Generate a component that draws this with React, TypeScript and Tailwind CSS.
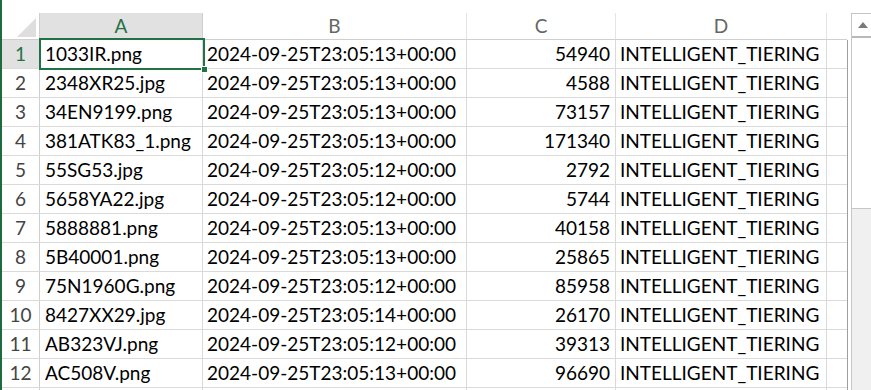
import React from "react"

const rows = [
    ["1033IR.png", "2024-09-25T23:05:13+00:00", "54940"],
    ["2348XR25.jpg", "2024-09-25T23:05:13+00:00", "4588"],
    ["34EN9199.png", "2024-09-25T23:05:13+00:00", "73157"],
    ["381ATK83_1.png", "2024-09-25T23:05:13+00:00", "171340"],
    ["55SG53.jpg", "2024-09-25T23:05:12+00:00", "2792"],
    ["5658YA22.jpg", "2024-09-25T23:05:12+00:00", "5744"],
    ["5888881.png", "2024-09-25T23:05:13+00:00", "40158"],
    ["5B40001.png", "2024-09-25T23:05:13+00:00", "25865"],
    ["75N1960G.png", "2024-09-25T23:05:12+00:00", "85958"],
    ["8427XX29.jpg", "2024-09-25T23:05:14+00:00", "26170"],
    ["AB323VJ.png", "2024-09-25T23:05:12+00:00", "39313"],
    ["AC508V.png", "2024-09-25T23:05:13+00:00", "96690"],
    ["", "", ""],
]

export default function App() {
    return (
        <div className="flex w-[871px] h-[390px] overflow-hidden bg-white text-[19px] text-black" style={{ fontFamily: "Lato, 'Open Sans', sans-serif" }}>
            {/* window edge */}
            <div className="w-[2px] h-full bg-[#1e6b41] shrink-0"></div>

            {/* sheet */}
            <div className="flex flex-col w-[845px] shrink-0">
                <div className="h-[13px] shrink-0"></div>
                <div className="flex h-[27px] shrink-0 border-b border-[#cfcfcf] text-[#666]">
                    <div className="w-[38px] border-r border-[#cfcfcf] flex items-end justify-end">
                        <svg width="24" height="23" viewBox="0 0 24 23">
                            <polygon points="2,21 21,2 21,21" fill="#dedede" />
                        </svg>
                    </div>
                    <div className="w-[163px] bg-[#e1e1e1] border-r border-[#cfcfcf] flex items-center justify-center text-[#217346]">A</div>
                    <div className="w-[264px] border-r border-[#e4e4e4] flex items-center justify-center">B</div>
                    <div className="w-[149px] border-r border-[#e4e4e4] flex items-center justify-center">C</div>
                    <div className="w-[211px] border-r border-[#e4e4e4] flex items-center justify-center">D</div>
                    <div className="w-[19px]"></div>
                </div>
                <div className="relative flex flex-col">
                    {rows.map((r, i) => (
                        <div key={i} className="flex h-[29px] shrink-0 border-b border-[#dadada] leading-none">
                            <div className={`w-[38px] border-r border-[#cfcfcf] flex items-end justify-center pb-[5px] ${i === 0 ? "bg-[#e1e1e1] text-[#217346]" : "text-[#444]"}`}>
                                {r[0] ? i + 1 : ""}
                            </div>
                            <div className="w-[163px] border-r border-[#dadada] flex items-end px-[5px] pb-[5px] whitespace-nowrap">{r[0]}</div>
                            <div className="w-[264px] border-r border-[#dadada] flex items-end px-[4px] pb-[5px] whitespace-nowrap">{r[1]}</div>
                            <div className="w-[149px] border-r border-[#dadada] flex items-end justify-end px-[5px] pb-[5px]">{r[2]}</div>
                            <div className="w-[211px] border-r border-[#dadada] flex items-end px-[4px] pb-[5px] whitespace-nowrap">{r[0] ? "INTELLIGENT_TIERING" : ""}</div>
                            <div className="w-[19px]"></div>
                        </div>
                    ))}
                    {/* active cell A1 */}
                    <div className="absolute left-[37px] top-[-2px] w-[166px] h-[32px] border-2 border-[#217346]"></div>
                    <div className="absolute left-[199px] top-[26px] w-[7px] h-[7px] bg-[#217346] border border-white"></div>
                </div>
            </div>

            {/* sheet right edge */}
            <div className="flex flex-col w-[2px] shrink-0">
                <div className="h-[40px]"></div>
                <div className="flex-1 w-px bg-[#9f9f9f]"></div>
            </div>

            {/* vertical scrollbar */}
            <div className="flex flex-col w-[22px] shrink-0 ml-[2px]">
                <div className="h-[13px]"></div>
                <div className="flex-1 flex flex-col border-l border-t border-[#c6c6c6] bg-[#f0f0f0]">
                    <div className="h-[24px] bg-white flex items-center justify-center border-b-2 border-[#b9b9b9]">
                        <svg width="10" height="6" viewBox="0 0 10 6">
                            <polygon points="0,6 5,0 10,6" fill="#7a7a7a" />
                        </svg>
                    </div>
                    <div className="h-[171px] bg-white border-b border-[#c6c6c6]"></div>
                </div>
            </div>
        </div>
    )
}
